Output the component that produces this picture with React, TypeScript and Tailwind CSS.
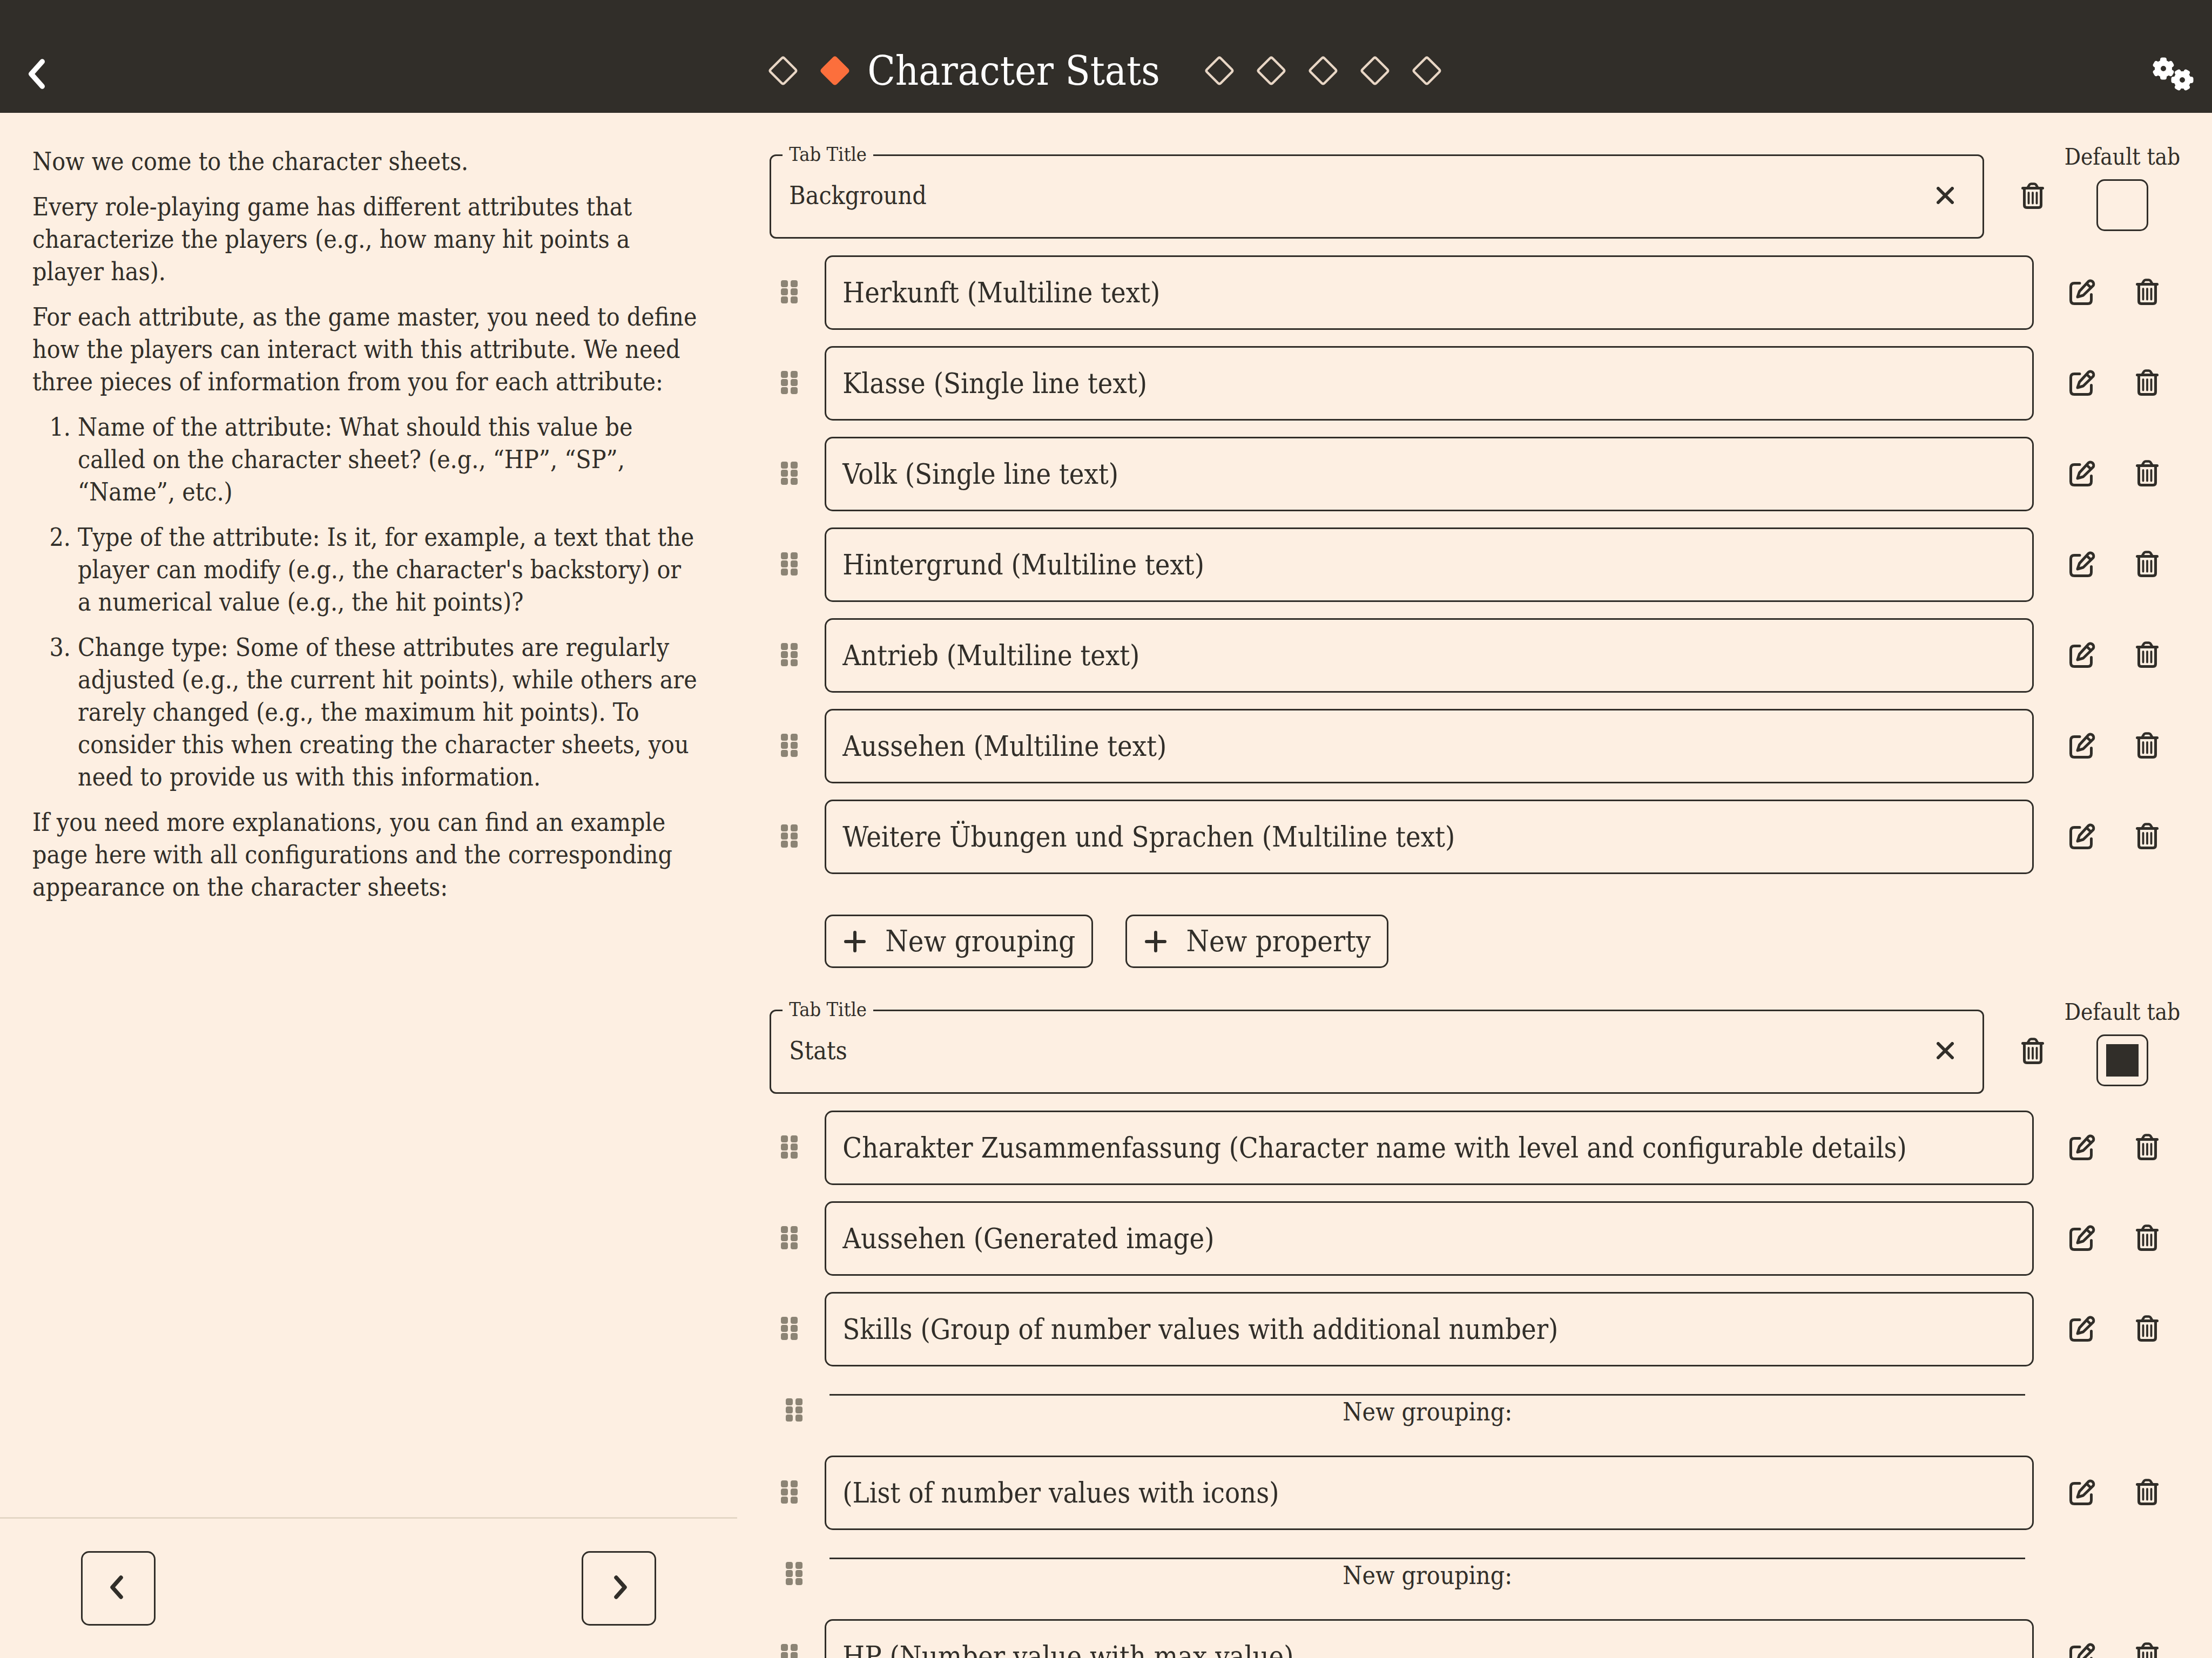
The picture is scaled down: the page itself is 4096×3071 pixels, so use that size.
import { useState } from "react";

type Item = { kind: "property"; text: string } | { kind: "grouping" };

const property = (text: string): Item => ({ kind: "property", text });

const backgroundItems: Item[] = [
  property("Herkunft (Multiline text)"),
  property("Klasse (Single line text)"),
  property("Volk (Single line text)"),
  property("Hintergrund (Multiline text)"),
  property("Antrieb (Multiline text)"),
  property("Aussehen (Multiline text)"),
  property("Weitere Übungen und Sprachen (Multiline text)"),
];

const statsItems: Item[] = [
  property("Charakter Zusammenfassung (Character name with level and configurable details)"),
  property("Aussehen (Generated image)"),
  property("Skills (Group of number values with additional number)"),
  { kind: "grouping" },
  property("(List of number values with icons)"),
  { kind: "grouping" },
  property("HP (Number value with max value)"),
];

function Diamond({ filled = false }: { filled?: boolean }) {
  return (
    <svg viewBox="0 0 56 56" className="size-14 shrink-0" aria-hidden="true">
      <path
        d="M25.500 5 Q28 2.500 30.500 5 L51 25.500 Q53.500 28 51 30.500 L30.500 51 Q28 53.500 25.500 51 L5 30.500 Q2.500 28 5 25.500 Z"
        fill={filled ? "#fc6f3c" : "none"}
        stroke={filled ? "#fc6f3c" : "#e8d6c5"}
        strokeWidth="4.500"
        strokeLinejoin="round"
      />
    </svg>
  );
}

function Chevron({ className, right = false }: { className: string; right?: boolean }) {
  return (
    <svg viewBox="0 0 24 44" className={className} fill="none" stroke="currentColor" strokeWidth="7.500" strokeLinecap="round" strokeLinejoin="round" aria-hidden="true">
      <path d={right ? "M4 4 L20 22 L4 40" : "M20 4 L4 22 L20 40"} />
    </svg>
  );
}

const gearTeeth = [0, 60, 120, 180, 240, 300];

function Gear({ cx, cy, turn }: { cx: number; cy: number; turn: number }) {
  return (
    <g transform={`translate(${cx} ${cy}) rotate(${turn})`}>
      <circle r="10.500" fill="none" stroke="currentColor" strokeWidth="11" />
      {gearTeeth.map((angle) => (
        <rect key={angle} x="-6" y="-20.500" width="12" height="11" rx="4" fill="currentColor" transform={`rotate(${angle})`} />
      ))}
    </g>
  );
}

function TrashIcon() {
  return (
    <svg viewBox="0 0 42 49" className="h-[49px] w-[42px]" fill="none" stroke="currentColor" strokeLinecap="round" strokeLinejoin="round" aria-hidden="true">
      <path d="M2.500 10.500 H39.500" strokeWidth="5" />
      <path d="M12 9 L15 4 Q16 2.500 18 2.500 H24 Q26 2.500 27 4 L30 9" strokeWidth="4.500" />
      <path d="M5.500 11 V42 Q5.500 46.500 10 46.500 H32 Q36.500 46.500 36.500 42 V11" strokeWidth="5" />
      <path d="M13.500 19 V38.500 M21 19 V38.500 M28.500 19 V38.500" strokeWidth="3.800" />
    </svg>
  );
}

function EditIcon() {
  return (
    <svg viewBox="0 0 48 49" className="h-[49px] w-12" fill="none" stroke="currentColor" strokeWidth="5" strokeLinecap="round" strokeLinejoin="round" aria-hidden="true">
      <path d="M19 8.500 H9 Q2.500 8.500 2.500 15 V40 Q2.500 46.500 9 46.500 H34 Q40.500 46.500 40.500 40 V29.500" />
      <path d="M15 34 L18.500 23.500 L35.500 5 A6 6 0 0 1 44 13 L25.500 31 Z M32 9.500 L40 17" />
    </svg>
  );
}

function DragHandle() {
  return (
    <button type="button" aria-label="Reorder" className="flex w-[72px] shrink-0 items-center justify-center self-stretch pb-1 text-[#8c8475]">
      <svg viewBox="0 0 31 43" className="h-[43px] w-[31px]" fill="currentColor" aria-hidden="true">
        {[0, 15, 30].map((y) => (
          <g key={y}>
            <rect x="0" y={y} width="13" height="13" rx="4" />
            <rect x="18" y={y} width="13" height="13" rx="4" />
          </g>
        ))}
      </svg>
    </button>
  );
}

function IconButton({ label, children }: { label: string; children: React.ReactNode }) {
  return (
    <button type="button" aria-label={label} className="flex w-[120px] shrink-0 items-center justify-center self-stretch pb-1">
      {children}
    </button>
  );
}

function AddButton({ label }: { label: string }) {
  return (
    <button type="button" className="flex h-[99px] items-center gap-9 rounded-[15px] border-3 border-[#312e29] pr-[30px] pl-[33px] text-[54px] leading-[60px]">
      <svg viewBox="0 0 40 40" className="size-10" fill="none" stroke="currentColor" strokeWidth="6" strokeLinecap="round" aria-hidden="true">
        <path d="M20 3 V37 M3 20 H37" />
      </svg>
      {label}
    </button>
  );
}

function ItemRow({ item }: { item: Item }) {
  if (item.kind === "grouping") {
    return (
      <li className="flex h-[105px] items-center pr-[286px] pl-[9px]">
        <DragHandle />
        <div className="ml-[30px] flex-1 border-t-3 border-[#312e29] text-center text-[46px] leading-[60px]">New grouping:</div>
      </li>
    );
  }
  return (
    <li className="flex h-[138px] items-center">
      <DragHandle />
      <div className="mx-[30px] flex h-full flex-1 items-center rounded-[15px] border-3 border-[#312e29] px-[30px] text-[52px] leading-[60px] whitespace-nowrap">{item.text}</div>
      <IconButton label="Edit"><EditIcon /></IconButton>
      <IconButton label="Delete"><TrashIcon /></IconButton>
    </li>
  );
}

function TabSection({ id, title, items, isDefault, onDefault }: { id: string; title: string; items: Item[]; isDefault: boolean; onDefault: () => void }) {
  const [value, setValue] = useState(title);
  return (
    <section className="pt-[58px]">
      <div className="flex items-end">
        <div className="relative mr-[30px] flex-1">
          <label htmlFor={`${id}-title`} className="absolute -top-6 left-6 bg-[#fdefe2] px-3 text-[36px] leading-[48px]">Tab Title</label>
          <input id={`${id}-title`} value={value} onChange={(e) => setValue(e.target.value)} className="block h-[156px] w-full rounded-[12px] border-3 border-[#312e29] pr-[120px] pb-1 pl-[33px] text-[46px] outline-none" />
          <button type="button" aria-label="Clear" onClick={() => setValue("")} className="absolute top-0 right-3 flex h-full w-[120px] items-center justify-center pb-1">
            <svg viewBox="0 0 32 32" className="size-8" fill="none" stroke="currentColor" strokeWidth="6" strokeLinecap="round" aria-hidden="true">
              <path d="M3 3 L29 29 M29 3 L3 29" />
            </svg>
          </button>
        </div>
        <div className="flex h-[156px]"><IconButton label="Delete tab"><TrashIcon /></IconButton></div>
        <label className="flex w-[212px] flex-col items-center pb-[14px] text-[42px] leading-[48px] whitespace-nowrap">
          Default tab
          <input type="checkbox" checked={isDefault} onChange={onDefault} className="mt-[17px] size-24 appearance-none rounded-[15px] border-3 border-[#312e29] p-[15px] checked:bg-[#312e29] checked:bg-clip-content" />
        </label>
      </div>
      <ul className="mt-[31px] flex flex-col gap-[30px]">
        {items.map((item, i) => <ItemRow key={i} item={item} />)}
      </ul>
      <div className="mt-[75px] ml-[102px] flex gap-[60px]">
        <AddButton label="New grouping" />
        <AddButton label="New property" />
      </div>
    </section>
  );
}

export default function App() {
  const [defaultTab, setDefaultTab] = useState("stats");
  return (
    <div className="flex h-screen flex-col overflow-hidden bg-[#fdefe2] font-['DejaVu_Serif_Condensed','DejaVu_Serif',serif] text-[#312e29]">
      <header className="flex h-[209px] shrink-0 items-end justify-between bg-[#312e29] pr-[34px] pl-[30px] text-white">
        <button type="button" aria-label="Back" className="flex h-36 w-[76px] items-center justify-center">
          <Chevron className="h-14 w-8" />
        </button>
        <div className="flex h-[156px] items-center gap-10">
          <Diamond />
          <Diamond filled />
          <h1 className="mr-[42px] -ml-2 text-[75px] leading-[90px]">Character Stats</h1>
          {[0, 1, 2, 3, 4].map((n) => <Diamond key={n} />)}
        </div>
        <button type="button" aria-label="Settings" className="flex h-36 w-[76px] items-center justify-center">
          <svg viewBox="0 0 76 62" className="h-[62px] w-[76px]" aria-hidden="true">
            <Gear cx={20} cy={21} turn={0} />
            <Gear cx={55} cy={42} turn={30} />
          </svg>
        </button>
      </header>
      <div className="flex min-h-0 flex-1">
        <aside className="flex w-1/3 shrink-0 flex-col">
          <div className="flex flex-1 flex-col gap-6 pt-[60px] pr-[72px] pl-[60px] text-[46px] leading-[60px]">
            <p>Now we come to the character sheets.</p>
            <p>Every role-playing game has different attributes that characterize the players (e.g., how many hit points a player has).</p>
            <p>For each attribute, as the game master, you need to define how the players can interact with this attribute. We need three pieces of information from you for each attribute:</p>
            <ol className="flex list-decimal flex-col gap-6 pl-[84px]">
              <li>Name of the attribute: What should this value be called on the character sheet? (e.g., “HP”, “SP”, “Name”, etc.)</li>
              <li>Type of the attribute: Is it, for example, a text that the player can modify (e.g., the character's backstory) or a numerical value (e.g., the hit points)?</li>
              <li>Change type: Some of these attributes are regularly adjusted (e.g., the current hit points), while others are rarely changed (e.g., the maximum hit points). To consider this when creating the character sheets, you need to provide us with this information.</li>
            </ol>
            <p>If you need more explanations, you can find an example page here with all configurations and the corresponding appearance on the character sheets:</p>
          </div>
          <div className="flex justify-between border-t-3 border-[#e4d7c6] px-[150px] py-[60px]">
            <button type="button" aria-label="Previous" className="flex size-[138px] items-center justify-center rounded-[15px] border-3 border-[#312e29] pr-1.5 pb-1">
              <Chevron className="h-11 w-6" />
            </button>
            <button type="button" aria-label="Next" className="flex size-[138px] items-center justify-center rounded-[15px] border-3 border-[#312e29] pb-1 pl-1.5">
              <Chevron className="h-11 w-6" right />
            </button>
          </div>
        </aside>
        <main className="min-w-0 flex-1 overflow-hidden px-[60px]">
          <TabSection id="background" title="Background" items={backgroundItems} isDefault={defaultTab === "background"} onDefault={() => setDefaultTab("background")} />
          <TabSection id="stats" title="Stats" items={statsItems} isDefault={defaultTab === "stats"} onDefault={() => setDefaultTab("stats")} />
        </main>
      </div>
    </div>
  );
}
